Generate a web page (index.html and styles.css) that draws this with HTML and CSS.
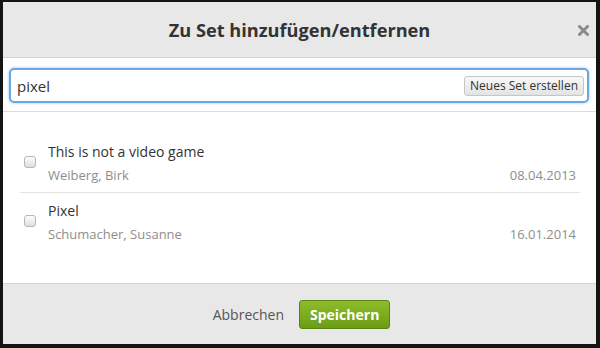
FILE: index.html
```html
<!DOCTYPE html>
<html lang="de">
<head>
    <meta charset="UTF-8">
    <title>Zu Set hinzufügen/entfernen</title>
    <link rel="stylesheet" href="styles.css">
</head>
<body>
    <div class="modal">
        <div class="modal-header">
            <h1 class="modal-title">Zu Set hinzufügen/entfernen</h1>
            <button class="close" aria-label="Schließen">
                <svg width="11" height="11" viewBox="0 0 11 11"><path d="M1.5 1.5L9.5 9.5M9.5 1.5L1.5 9.5" stroke="#8a8a8a" stroke-width="3" stroke-linecap="round"/></svg>
            </button>
        </div>
        <div class="search">
            <div class="search-field">
                <input class="search-input" type="text" value="pixel">
                <button class="new-set">Neues Set erstellen</button>
            </div>
        </div>
        <div class="set-list">
            <label class="set-item">
                <input type="checkbox" class="set-check">
                <div class="set-info">
                    <div class="set-name">This is not a video game</div>
                    <div class="set-meta">
                        <span>Weiberg, Birk</span>
                        <span>08.04.2013</span>
                    </div>
                </div>
            </label>
            <label class="set-item">
                <input type="checkbox" class="set-check">
                <div class="set-info">
                    <div class="set-name">Pixel</div>
                    <div class="set-meta">
                        <span>Schumacher, Susanne</span>
                        <span>16.01.2014</span>
                    </div>
                </div>
            </label>
        </div>
        <div class="modal-footer">
            <button class="cancel">Abbrechen</button>
            <button class="save">Speichern</button>
        </div>
    </div>
</body>
</html>
```
FILE: styles.css
```css
body {
    margin: 0;
    background: #141414;
    font-family: "Open Sans", Arial, sans-serif;
}
.modal {
    margin: 2px 4px 4px 3px;
    height: 342px;
    background: #fff;
    display: flex;
    flex-direction: column;
}
.modal-header {
    height: 55px;
    flex: none;
    background: #e8e8e8;
    border-bottom: 1px solid #d3d3d3;
    display: flex;
    align-items: center;
    justify-content: center;
    position: relative;
}
.modal-title {
    margin: 0;
    font-size: 18.2px;
    font-weight: bold;
    color: #333;
}
.close {
    position: absolute;
    right: 7px;
    top: 23px;
    padding: 0;
    border: none;
    background: none;
    display: flex;
}
.search {
    flex: none;
    padding: 10px 7px 8px 6px;
    border-bottom: 1px solid #dcdcdc;
}
.search-field {
    height: 35px;
    box-sizing: border-box;
    border: 2px solid #6aa7de;
    border-radius: 5px;
    box-shadow: 0 0 3px rgba(82, 150, 220, 0.6);
    display: flex;
    align-items: center;
    padding: 0 3px 0 6px;
}
.search-input {
    flex: 1;
    border: none;
    outline: none;
    padding: 0;
    font-family: inherit;
    font-size: 15px;
    color: #333;
}
.new-set {
    height: 20px;
    padding: 0 5px;
    border: 1px solid #c6c6c6;
    border-radius: 3px;
    background: linear-gradient(#f9f9f9, #e3e3e3);
    font-family: inherit;
    font-size: 12px;
    color: #333;
}
.set-list {
    flex: 1;
    padding: 22px 16px 0 17px;
    border-bottom: 1px solid #d3d3d3;
}
.set-item {
    display: flex;
    align-items: center;
    padding: 8px 4px 7px;
}
.set-item + .set-item {
    border-top: 1px solid #e4e4e4;
}
.set-check {
    appearance: none;
    margin: 0 12px 3px 0;
    width: 12px;
    height: 12px;
    border: 1px solid #b8b8b8;
    border-radius: 3px;
    background: linear-gradient(#fdfdfd, #dedede);
}
.set-info {
    flex: 1;
}
.set-name {
    font-size: 14px;
    line-height: 20px;
    color: #333;
}
.set-meta {
    margin-top: 3px;
    display: flex;
    justify-content: space-between;
    font-size: 13px;
    line-height: 20px;
    color: #8e8e8e;
}
.modal-footer {
    flex: none;
    height: 60px;
    background: #e8e8e8;
    display: flex;
    align-items: center;
    justify-content: center;
    gap: 15px;
}
.cancel {
    border: none;
    background: none;
    padding: 0;
    font-family: inherit;
    font-size: 14px;
    color: #555;
    margin-left: 4px;
}
.save {
    height: 29px;
    padding: 0 10px;
    border: 1px solid #5a8412;
    border-radius: 3px;
    background: linear-gradient(#8dbd2b, #6c9c17);
    color: #fff;
    font-family: inherit;
    font-size: 14px;
    font-weight: bold;
}
```
